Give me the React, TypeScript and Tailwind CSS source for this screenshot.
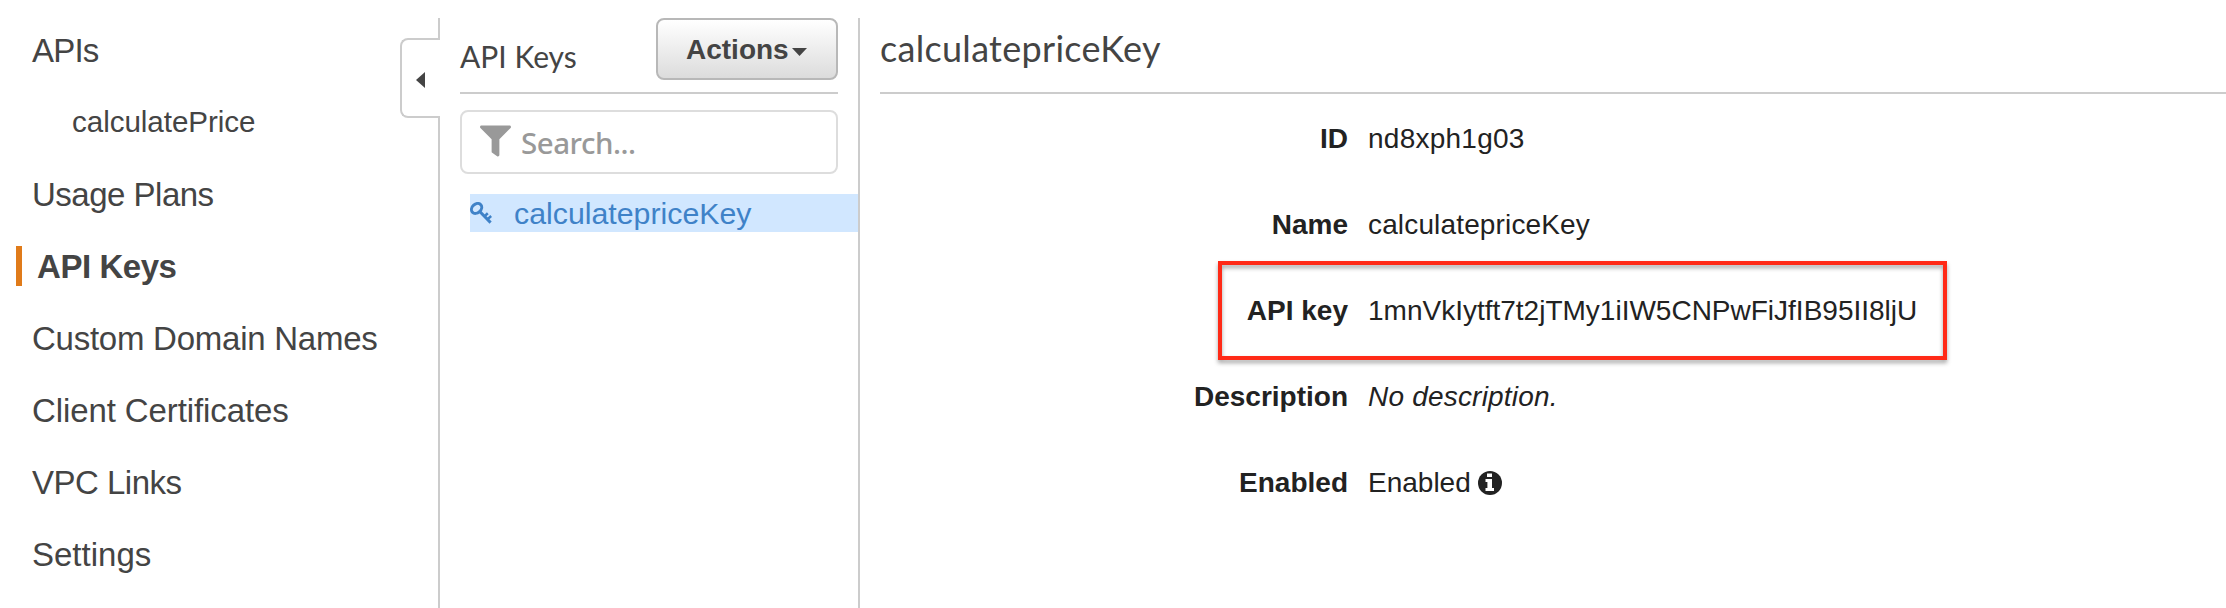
import { FaFilter } from "react-icons/fa";
import type { ReactNode } from "react";

type NavItem = { label: string; className: string; active?: boolean };

const NAV: NavItem[] = [
  { label: "APIs", className: "pl-8 text-[33px] tracking-[-0.8px]" },
  { label: "calculatePrice", className: "-mt-0.5 pl-[72px] text-[29.6px] tracking-[-0.05px]" },
  { label: "Usage Plans", className: "pl-8 text-[33px] tracking-[-0.5px]" },
  { label: "API Keys", className: "pl-[15px] text-[33px] font-bold tracking-[-0.45px]", active: true },
  { label: "Custom Domain Names", className: "pl-8 text-[33px] tracking-[-0.25px]" },
  { label: "Client Certificates", className: "pl-8 text-[33px] tracking-[-0.1px]" },
  { label: "VPC Links", className: "pl-8 text-[33px] tracking-[-0.5px]" },
  { label: "Settings", className: "pl-8 text-[33px]" },
];

function KeyIcon() {
  return (
    <svg className="h-[22px] w-[22px] shrink-0" viewBox="0 0 22 22" fill="none" stroke="currentColor">
      <ellipse cx="6.6" cy="6.4" rx="5.6" ry="4.4" strokeWidth="3" transform="rotate(-42 6.6 6.4)" />
      <path d="M10 9.8 L20.6 20.6" strokeWidth="3" />
      <path d="M14.4 14.4 L17.8 11.2 M17.4 17.4 L21.2 14" strokeWidth="2.6" />
    </svg>
  );
}

function InfoIcon() {
  return (
    <svg className="ml-[7px] h-6 w-6 shrink-0" viewBox="0 0 24 24">
      <circle cx="12" cy="12" r="12" fill="#222" />
      <path d="M9 2.6H14V6H9Z M7.5 8H14V17H16V20H7.5V17H9.4V11H7.5Z" fill="#fff" />
    </svg>
  );
}

function Row({ label, children }: { label: string; children: ReactNode }) {
  return (
    <div className="flex h-[86px] items-center gap-5">
      <dt className="w-[468px] text-right font-bold">{label}</dt>
      <dd className="flex items-center">{children}</dd>
    </div>
  );
}

export default function App() {
  return (
    <div className="flex h-[608px] w-[2226px] overflow-hidden bg-white font-['Liberation_Sans',Arial,sans-serif] whitespace-nowrap text-[#444]">
      <nav className="w-[400px] pt-[15px]">
        {NAV.map((item) => (
          <div key={item.label} className="flex h-[72px] items-center">
            {item.active && <span className="-mt-0.5 ml-4 h-10 w-1.5 bg-[#e07b1a]" />}
            <span className={item.className}>{item.label}</span>
          </div>
        ))}
      </nav>

      <div className="flex w-10 flex-col pt-[18px]">
        <div className="ml-auto h-5 w-0.5 bg-[#ccc]" />
        <button className="flex h-20 items-center rounded-l-lg border-2 border-r-0 border-[#ccc] pt-1 pl-3.5">
          <svg className="h-4 w-[9px]" viewBox="0 0 9 16" fill="#444">
            <path d="M9 0V16L0 8Z" />
          </svg>
        </button>
        <div className="ml-auto w-0.5 flex-1 bg-[#ccc]" />
      </div>

      <section className="mt-[18px] w-[420px] border-r-2 border-[#ccc] pl-5">
        <header className="mr-5 flex h-[76px] items-start justify-between border-b-2 border-[#ccc]">
          <h2 className="mt-5 font-['Lato',sans-serif] text-[30px] leading-[36px]">API Keys</h2>
          <button className="flex h-[62px] w-[182px] items-center rounded-lg border-2 border-[#b8b8b8] bg-linear-to-b from-white to-[#dcdcdc] pt-0.5 pl-7 text-[28px] font-bold">
            Actions
            <svg className="mt-1 ml-[3px] h-2 w-[15px]" viewBox="0 0 15 8" fill="#444">
              <path d="M0 0H15L7.5 8Z" />
            </svg>
          </button>
        </header>
        <div className="mt-4 mr-5 flex h-16 items-center rounded-lg border-2 border-[#ddd] pl-[18px] text-[#999]">
          <FaFilter className="-mt-0.5 h-8 w-[31px]" />
          <span className="ml-2.5 pt-0.5 font-['Noto_Sans',sans-serif] text-[29.5px] font-medium tracking-[-0.5px]">Search...</span>
        </div>
        <div className="mt-5 ml-2.5 flex h-[38px] items-center gap-[22px] bg-[#d1e7ff] text-[#3f82c8]">
          <KeyIcon />
          <span className="pt-0.5 text-[30.3px]">calculatepriceKey</span>
        </div>
      </section>

      <main className="flex-1 pt-[18px] pl-5">
        <h1 className="h-[76px] border-b-2 border-[#ccc] pt-2 font-['Lato',sans-serif] text-[36px] leading-[44px] tracking-[0.3px]">
          calculatepriceKey
        </h1>
        <dl className="relative mt-0.5 text-[28px] text-[#222]">
          <Row label="ID">
            <span className="tracking-[0.25px]">nd8xph1g03</span>
          </Row>
          <Row label="Name">
            <span className="tracking-[0.15px]">calculatepriceKey</span>
          </Row>
          <Row label="API key">1mnVkIytft7t2jTMy1iIW5CNPwFiJfIB95II8ljU</Row>
          <Row label="Description">
            <em className="tracking-[0.2px]">No description.</em>
          </Row>
          <Row label="Enabled">
            Enabled
            <InfoIcon />
          </Row>
          <div className="absolute top-[165px] left-[338px] h-[99px] w-[729px] border-4 border-[#ff2a17] drop-shadow-[0_3px_2px_rgba(0,0,0,0.35)]" />
        </dl>
      </main>
    </div>
  );
}
